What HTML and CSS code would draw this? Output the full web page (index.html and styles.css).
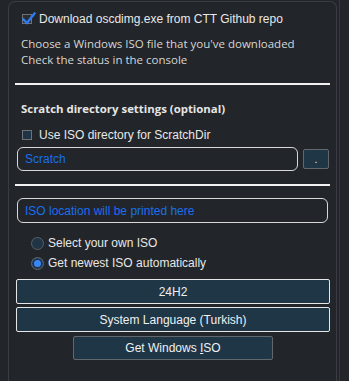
FILE: index.html
```html
<!DOCTYPE html>
<html lang="en">
<head>
  <meta charset="UTF-8">
  <title>MicroWin ISO</title>
  <link rel="stylesheet" href="styles.css">
</head>
<body>

<div class="panel">
  <label class="check-row first">
    <span class="checkbox checked">
      <svg width="14" height="14" viewBox="0 0 14 14"><path d="M1.5 7.5 L5 11 L12.5 1.5" fill="none" stroke="#2f7bf5" stroke-width="2.4" stroke-linecap="square"/></svg>
    </span>
    <span>Download oscdimg.exe from CTT Github repo</span>
  </label>

  <p class="desc">Choose a Windows ISO file that you've downloaded<br>Check the status in the console</p>

  <div class="rule"></div>

  <h3 class="heading">Scratch directory settings (optional)</h3>

  <label class="check-row second">
    <span class="checkbox"></span>
    <span>Use ISO directory for ScratchDir</span>
  </label>

  <div class="path-row">
    <div class="textbox scratch">Scratch</div>
    <button class="dot-btn">.</button>
  </div>

  <div class="rule rule-two"></div>

  <div class="textbox iso-path">ISO location will be printed here</div>

  <label class="radio-row first-radio">
    <span class="radio"></span>
    <span>Select your own ISO</span>
  </label>
  <label class="radio-row">
    <span class="radio selected"></span>
    <span>Get newest ISO automatically</span>
  </label>

  <button class="wide-btn first-btn">24H2</button>
  <button class="wide-btn">System Language (Turkish)</button>
  <button class="get-btn">Get Windows <u>I</u>SO</button>
</div>

<div class="scroll-edge"></div>

</body>
</html>
```

FILE: styles.css
```css
* {
  margin: 0;
  padding: 0;
  box-sizing: border-box;
}

body {
  background-color: #222529;
  display: flex;
  height: 381px;
  overflow: hidden;
  font-family: 'Liberation Sans', Arial, sans-serif;
  font-size: 12px;
  color: #e8e8e8;
}

.panel {
  margin-left: 8px;
  margin-top: 1px;
  width: 329px;
  height: 380px;
  border: 1px solid #393d42;
  border-bottom: none;
  border-radius: 7px 7px 0 0;
  display: flex;
  flex-direction: column;
  overflow: hidden;
}

.scroll-edge {
  margin-left: 2px;
  width: 1px;
  height: 100%;
  background-color: #34383c;
}

.check-row {
  display: flex;
  align-items: center;
  height: 14px;
  padding-left: 13px;
  gap: 7px;
}

.check-row.first {
  margin-top: 10px;
}

.check-row.second {
  margin-top: 11px;
}

.checkbox {
  position: relative;
  width: 10px;
  height: 10px;
  border: 1px solid #6e7378;
  background-color: #1f3445;
}

.checkbox.checked {
  background-color: #2a2e33;
}

.checkbox svg {
  position: absolute;
  left: -1px;
  top: -3px;
}

.desc {
  margin-top: 10px;
  padding-left: 12px;
  font-family: 'Open Sans', sans-serif;
  font-size: 11.5px;
  line-height: 16px;
  color: #d6d6d6;
}

.rule {
  margin: 15px 6px 0;
  height: 2px;
  flex-shrink: 0;
  background-color: #f2f2f2;
}

.rule-two {
  margin-top: 13px;
}

.heading {
  margin-top: 16px;
  padding-left: 12px;
  font-family: 'Open Sans', sans-serif;
  font-size: 11.4px;
  font-weight: 700;
  line-height: 16px;
  color: #e6e6e6;
}

.path-row {
  display: flex;
  align-items: center;
  gap: 5px;
  margin-top: 5px;
  padding-left: 8px;
}

.textbox {
  height: 24px;
  flex-shrink: 0;
  border: 1px solid #d8d8d8;
  border-radius: 6px;
  padding-left: 7px;
  display: flex;
  align-items: center;
  color: #1a6ef0;
  font-size: 12px;
}

.scratch {
  width: 281px;
}

.dot-btn {
  width: 26px;
  height: 20px;
  background-color: #1f3647;
  border: 1px solid #62676c;
  border-radius: 2px;
  color: #e8e8e8;
  font-family: 'Liberation Sans', Arial, sans-serif;
  font-size: 11px;
}

.iso-path {
  margin: 12px 0 0 8px;
  width: 311px;
  height: 25px;
}

.radio-row {
  display: flex;
  align-items: center;
  height: 16px;
  flex-shrink: 0;
  margin-top: 4px;
  padding-left: 22px;
  gap: 4px;
}

.radio-row.first-radio {
  margin-top: 12px;
}

.radio {
  width: 13px;
  height: 13px;
  border-radius: 50%;
  border: 1px solid #5a5f64;
  background-color: #1f3445;
}

.radio.selected {
  background-color: #3b86f7;
  box-shadow: inset 0 0 0 2px #1f3445;
}

.wide-btn {
  margin: 3px 0 0 7px;
  width: 314px;
  height: 25px;
  flex-shrink: 0;
  background-color: #1f3647;
  border: 1px solid #e6e6e6;
  border-radius: 2px;
  color: #f0f0f0;
  font-family: 'Liberation Sans', Arial, sans-serif;
  font-size: 12px;
}

.wide-btn.first-btn {
  margin-top: 8px;
}

.get-btn {
  margin: 4px 0 0 64px;
  width: 200px;
  height: 24px;
  flex-shrink: 0;
  background-color: #1f3647;
  border: 1px solid #62676c;
  border-radius: 2px;
  color: #f0f0f0;
  font-family: 'Liberation Sans', Arial, sans-serif;
  font-size: 12px;
}
```
